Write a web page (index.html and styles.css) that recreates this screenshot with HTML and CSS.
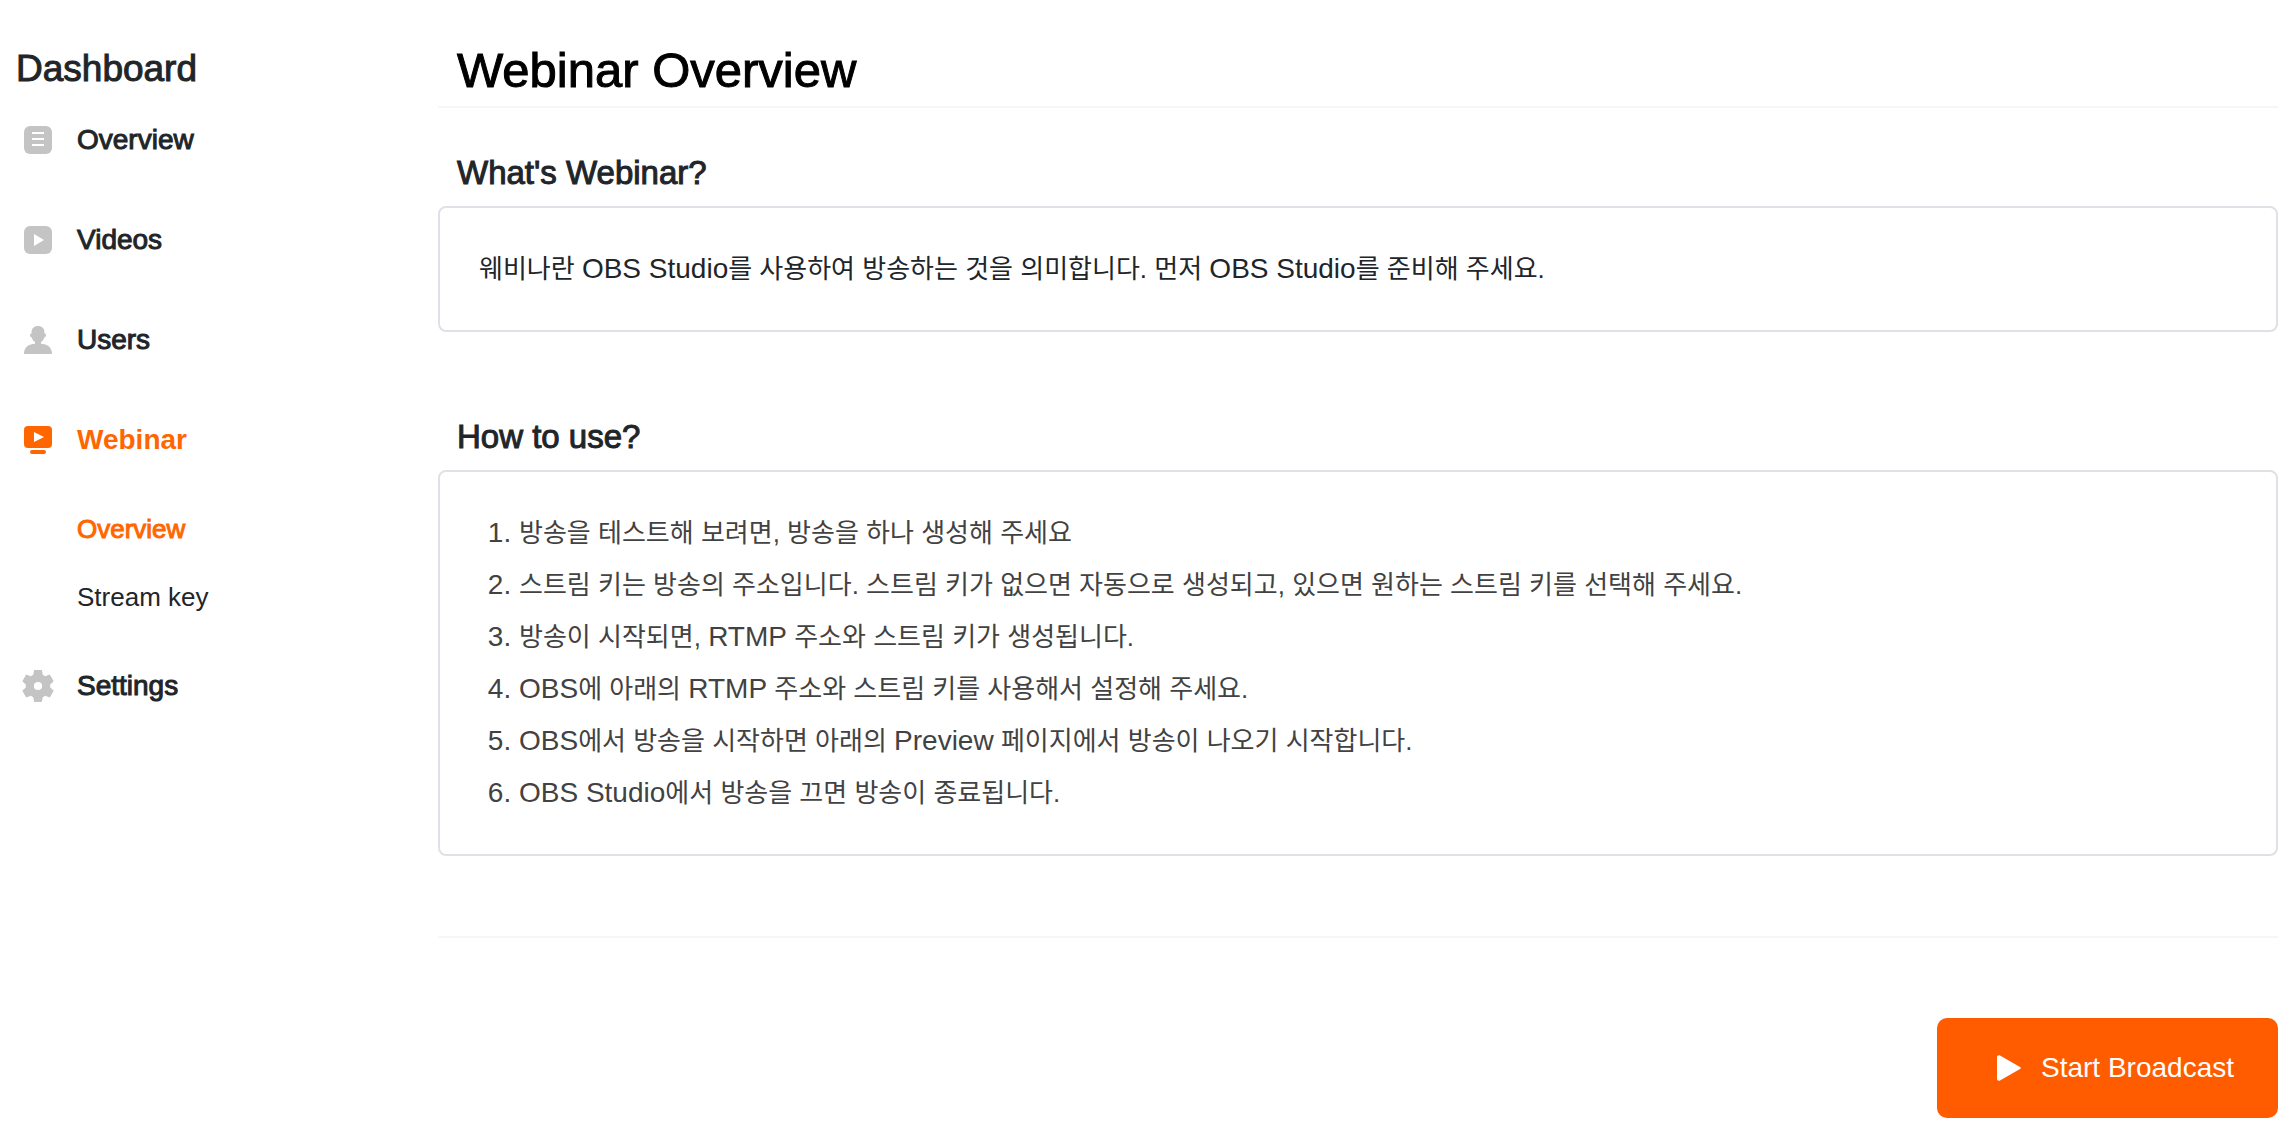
FILE: index.html
```html
<!DOCTYPE html>
<html lang="ko">
<head>
<meta charset="utf-8">
<meta name="viewport" content="width=device-width, initial-scale=1">
<title>Webinar Overview</title>
<link rel="stylesheet" href="styles.css">
</head>
<body>
<div class="layout">
  <aside class="sidebar">
    <p class="sidebar-title">Dashboard</p>
    <nav>
      <ul class="nav">
        <li>
          <a class="nav-link" href="#overview">
            <svg class="nav-icon" viewBox="0 0 28 28" aria-hidden="true"><rect width="28" height="28" rx="6" fill="currentColor"/><path d="M8 7h12M8 13h12M8 19h12" stroke="#fff" stroke-width="2"/></svg>
            <span class="nav-text">Overview</span>
          </a>
        </li>
        <li>
          <a class="nav-link" href="#videos">
            <svg class="nav-icon" viewBox="0 0 28 28" aria-hidden="true"><rect width="28" height="28" rx="6" fill="currentColor"/><path d="M10 8l10 6-10 6z" fill="#fff"/></svg>
            <span class="nav-text">Videos</span>
          </a>
        </li>
        <li>
          <a class="nav-link" href="#users">
            <svg class="nav-icon" viewBox="0 0 28 28" aria-hidden="true"><path d="M14 0c4 0 6.400 2.500 6.400 6v1.600c1.200 0 1.600.6 1.600 1.600 0 1.300-.8 2-1.800 2.200C19.700 13.500 18.500 15 17 16v1.800c6 .2 11 3.200 11 10.200H0c0-7 5-10 11-10.200V16c-1.500-1-2.700-2.500-3.200-4.600C6.800 11.200 6 10.500 6 9.200c0-1 .4-1.600 1.600-1.600V6C7.600 2.500 10 0 14 0z" fill="currentColor"/></svg>
            <span class="nav-text">Users</span>
          </a>
        </li>
        <li>
          <a class="nav-link active" href="#webinar">
            <svg class="nav-icon" viewBox="0 0 28 28" aria-hidden="true"><rect width="28" height="22" rx="4" fill="currentColor"/><rect x="6" y="24" width="16" height="4" rx="2" fill="currentColor"/><path d="M10 6l10 5-10 5z" fill="#fff"/></svg>
            <span class="nav-text">Webinar</span>
          </a>
          <ul class="subnav">
            <li><a class="subnav-link active" href="#webinar-overview" aria-current="page">Overview</a></li>
            <li><a class="subnav-link" href="#stream-key">Stream key</a></li>
          </ul>
        </li>
        <li>
          <a class="nav-link" href="#settings">
            <svg class="nav-icon nav-icon-gear" viewBox="0 0 32 32" aria-hidden="true"><path fill="currentColor" fill-rule="evenodd" d="M12.200 0h7.600l1 4.800 2.400 1.400L27.800 4.600l3.900 6.600L28.200 14.500v3L31.700 20.800l-3.900 6.600-4.600-1.600-2.400 1.400-1 4.800h-7.600l-1-4.800-2.400-1.400-4.600 1.600L.3 20.800 3.800 17.500v-3L.3 11.200 4.200 4.600 8.800 6.200l2.400-1.400zM16 11.900a4.100 4.100 0 1 0 0 8.200 4.100 4.100 0 0 0 0-8.200z"/></svg>
            <span class="nav-text">Settings</span>
          </a>
        </li>
      </ul>
    </nav>
  </aside>

  <main class="main">
    <h1 class="page-title">Webinar Overview</h1>

    <section class="section">
      <h2 class="section-title">What's Webinar?</h2>
      <div class="card">
        <p class="card-text">웨비나란 <span class="latin">OBS Studio</span>를 사용하여 방송하는 것을 의미합니다. 먼저 <span class="latin">OBS Studio</span>를 준비해 주세요.</p>
      </div>
    </section>

    <section class="section">
      <h2 class="section-title">How to use?</h2>
      <div class="card">
        <ol class="steps">
          <li>방송을 테스트해 보려면, 방송을 하나 생성해 주세요</li>
          <li>스트림 키는 방송의 주소입니다. 스트림 키가 없으면 자동으로 생성되고, 있으면 원하는 스트림 키를 선택해 주세요.</li>
          <li>방송이 시작되면, <span class="latin">RTMP</span> 주소와 스트림 키가 생성됩니다.</li>
          <li><span class="latin">OBS</span>에 아래의 <span class="latin">RTMP</span> 주소와 스트림 키를 사용해서 설정해 주세요.</li>
          <li><span class="latin">OBS</span>에서 방송을 시작하면 아래의 <span class="latin">Preview</span> 페이지에서 방송이 나오기 시작합니다.</li>
          <li><span class="latin">OBS Studio</span>에서 방송을 끄면 방송이 종료됩니다.</li>
        </ol>
      </div>
    </section>

    <div class="actions">
      <button class="btn-start" type="button">
        <svg class="btn-icon" viewBox="0 0 24 26" aria-hidden="true"><path d="M0 2.200C0 .5 1.600-.2 3 .6l20 11.300c1.200.7 1.200 1.500 0 2.200L3 25.400c-1.400.8-3 .1-3-1.600z" fill="currentColor"/></svg>
        Start Broadcast
      </button>
    </div>
  </main>
</div>
</body>
</html>
```
FILE: styles.css
```css
* {
  box-sizing: border-box;
}

body {
  margin: 0;
  background: #fff;
  color: #212529;
  font-family: "Helvetica Neue", "Liberation Sans", "Noto Sans CJK KR", sans-serif;
  font-size: 28px;
}

h1,
h2,
p,
ul,
ol {
  margin: 0;
  padding: 0;
}

a {
  color: inherit;
  text-decoration: none;
}

.layout {
  display: flex;
  min-height: 100vh;
}

/* Sidebar */

.sidebar {
  flex: 0 0 438px;
  padding: 48px 16px 20px;
}

.sidebar-title {
  font-size: 37px;
  line-height: 42px;
  -webkit-text-stroke: 1px currentColor;
}

.nav,
.subnav {
  list-style: none;
}

.nav-link {
  display: flex;
  align-items: center;
  height: 100px;
  padding-left: 6px;
}

.nav-icon {
  flex: none;
  width: 32px;
  height: 28px;
  margin-right: 23px;
  color: #c4c4c4;
}

.nav-icon-gear {
  height: 32px;
}

.nav-text {
  -webkit-text-stroke: 1px currentColor;
}

.nav-link.active,
.nav-link.active .nav-icon,
.subnav-link.active {
  color: #ff6600;
}

.nav-link.active .nav-text {
  font-weight: 700;
  -webkit-text-stroke: 0;
}

.subnav {
  padding: 5px 0 5px 61px;
}

.subnav-link {
  display: block;
  font-size: 26px;
  line-height: 68px;
}

.subnav-link.active {
  -webkit-text-stroke: 1px currentColor;
}

/* Content */

.main {
  flex: 1;
  min-width: 0;
  padding: 42px 16px 20px 0;
}

.page-title {
  padding: 0 19px 8px;
  border-bottom: 2px solid #f6f6f6;
  color: #000;
  font-size: 49px;
  font-weight: 400;
  line-height: 56px;
  -webkit-text-stroke: 1px currentColor;
}

.section {
  margin-top: 45px;
}

.section + .section {
  margin-top: 85px;
}

.section-title {
  margin-bottom: 13px;
  padding: 0 19px;
  font-size: 33px;
  font-weight: 400;
  line-height: 40px;
  -webkit-text-stroke: 1px currentColor;
}

.card {
  padding: 35px 39px;
  border: 2px solid #dee2e6;
  border-radius: 8px;
  font-size: 26px;
  line-height: 52px;
}

.latin {
  font-size: 28px;
  line-height: 1;
}

.steps {
  padding-left: 40px;
  color: #424242;
}

.steps li::marker {
  font-size: 28px;
}

.actions {
  display: flex;
  justify-content: flex-end;
  margin-top: 80px;
  padding-top: 80px;
  border-top: 2px solid #f6f6f6;
}

.btn-start {
  display: flex;
  align-items: center;
  gap: 20px;
  height: 100px;
  padding: 0 44px 0 60px;
  border: 0;
  border-radius: 10px;
  background: #ff5c00;
  color: #fff;
  font: inherit;
  cursor: pointer;
}

.btn-icon {
  width: 24px;
  height: 26px;
}
```
